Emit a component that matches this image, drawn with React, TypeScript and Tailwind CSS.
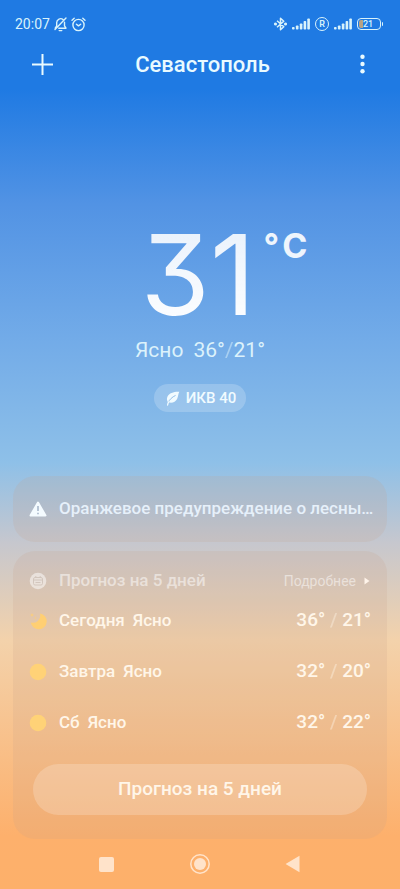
import type { ReactNode } from "react";

const forecast = [
  { day: "Сегодня", text: "Ясно", high: "36°", low: "21°", night: true },
  { day: "Завтра", text: "Ясно", high: "32°", low: "20°", night: false },
  { day: "Сб", text: "Ясно", high: "32°", low: "22°", night: false },
];

const SignalIcon = () => (
  <svg width="18" height="12" viewBox="0 0 18 12" fill="currentColor" aria-hidden="true">
    <rect x="0" y="9" width="2.6" height="2.6" rx="0.8" />
    <rect x="3.9" y="7.4" width="2.6" height="4.2" rx="0.8" />
    <rect x="7.8" y="5.4" width="2.6" height="6.2" rx="0.8" />
    <rect x="11.6" y="3" width="2.6" height="8.6" rx="0.8" />
    <rect x="15.3" y="0.4" width="2.6" height="11.2" rx="0.8" />
  </svg>
);

const StatusBar = () => (
  <div className="flex h-12 items-center justify-between pl-[15px] pr-[17px] text-[#d9f3fb]">
    <div className="flex items-center gap-1">
      <span className="text-sm">20:07</span>
      <svg width="13" height="15" viewBox="0 0 13 15" fill="none" stroke="currentColor" strokeWidth="1.4" strokeLinecap="round" strokeLinejoin="round" aria-hidden="true">
        <path d="M9.2 2.7A3.9 3.9 0 0 0 2.7 5.6v3.2L1.2 11.2h1M10.5 5.2v3.6l1.5 2.4H4.8M5.2 13.6h2.6M12 1 1 12.6" />
      </svg>
      <svg width="15" height="15" viewBox="0 0 15 15" fill="none" stroke="currentColor" strokeWidth="1.4" strokeLinecap="round" strokeLinejoin="round" aria-hidden="true">
        <circle cx="7.5" cy="8" r="5.6" />
        <path d="M1 3.2 3.2 1.2M14 3.2 11.8 1.2M5.4 7.2l2.1 1.7 2.2-1.7" />
      </svg>
    </div>
    <div className="flex items-center gap-[5px]">
      <svg width="13" height="14" viewBox="0 0 13 14" fill="none" stroke="currentColor" strokeWidth="1.5" strokeLinejoin="round" aria-hidden="true">
        <path d="M3 3.8 9.8 9.8 6.5 12.8V1.2l3.3 3L3 10.2" />
        <circle cx="1.5" cy="7" r="0.8" fill="currentColor" />
        <circle cx="11.5" cy="7" r="0.8" fill="currentColor" />
      </svg>
      <SignalIcon />
      <span className="flex size-[14px] items-center justify-center rounded-full border border-current text-[9px] font-semibold leading-none">
        R
      </span>
      <SignalIcon />
      <span className="flex items-center gap-px">
        <span className="flex h-3 w-6 items-center rounded-[4px] border border-current p-px">
          <span className="h-2 w-1 rounded-l-[2px] bg-[#b7a184]" />
          <span className="text-[9px] font-medium leading-none">21</span>
        </span>
        <span className="h-1 w-px rounded-r bg-current" />
      </span>
    </div>
  </div>
);

const TopBar = () => (
  <header className="flex h-8 items-center justify-between pl-8 pr-7 text-[#e9faff]">
    <button aria-label="Добавить город">
      <svg width="21" height="21" viewBox="0 0 21 21" stroke="currentColor" strokeWidth="2" aria-hidden="true">
        <path d="M10.5 0v21M0 10.5h21" />
      </svg>
    </button>
    <h1 className="text-[22px] font-medium">Севастополь</h1>
    <button aria-label="Меню" className="flex w-5 justify-center">
      <svg width="5" height="20" viewBox="0 0 5 20" fill="currentColor" aria-hidden="true">
        <circle cx="2.5" cy="2.8" r="2.2" />
        <circle cx="2.5" cy="10" r="2.2" />
        <circle cx="2.5" cy="17.2" r="2.2" />
      </svg>
    </button>
  </header>
);

const Current = () => (
  <section className="flex flex-col items-center pt-[138px]">
    <div className="relative pr-1 text-white/90">
      <span className="bg-linear-to-b from-white/85 to-white bg-clip-text font-[Inter] text-[112px] leading-[112px] text-transparent [font-feature-settings:'cv09']">
        31
      </span>
      <span className="absolute left-full top-2 flex gap-[3px] pl-1 pt-1 font-[Inter] text-[34px] font-bold leading-8">
        <span>°</span>
        <span>C</span>
      </span>
    </div>
    <p className="mt-1 flex gap-[10px] text-[21px] leading-8 text-[#dcf2fb]">
      <span>Ясно</span>
      <span>
        36°<span className="opacity-50">/</span>21°
      </span>
    </p>
    <a href="#air" className="mt-[18px] flex h-7 items-center gap-[6px] rounded-full bg-white/20 pl-3 pr-[10px] text-[15px] font-medium text-[#f1fbff]">
      <svg width="14" height="15" viewBox="0 0 14 15" fill="none" strokeLinecap="round" aria-hidden="true">
        <path d="M13.3.7C8.5.4 3.200 1.600 1.400 5.800c-.9 2.200-.4 4.100.6 5.400 3.800 1.200 7.400.2 9.100-3.200C12.200 5.700 12.100 3 13.300.7Z" fill="currentColor" />
        <path d="M9.200 4.600C6.200 6 3.600 8.400 2 11.600" stroke="#93bfea" strokeWidth="1" />
        <path d="M2.600 10.800C2.200 11.800 1.800 12.900 1.600 14" stroke="currentColor" strokeWidth="1.300" />
      </svg>
      ИКВ 40
    </a>
  </section>
);

const Card = ({ children, className }: { children: ReactNode; className: string }) => (
  <section className={`rounded-[22px] bg-[#c9a08c]/18 ${className}`}>{children}</section>
);

const DayIcon = ({ night }: { night: boolean }) => (
  <svg width="18" height="18" viewBox="0 0 18 18" aria-hidden="true">
    {night ? (
      <>
        <path d="M11 1.400A8 8 0 1 1 1.800 10.500 7.400 7.400 0 0 0 11 1.400Z" fill="#ffcf73" />
        <path d="m3 1 .5 1.500L5 3l-1.500.5L3 5l-.5-1.500L1 3l1.500-.5ZM6.500 4.800l.3.900.9.300-.9.300-.3.900-.3-.9-.9-.3.900-.3Z" fill="#ffcf73" />
      </>
    ) : (
      <circle cx="9" cy="9" r="8.3" fill="#ffd277" />
    )}
  </svg>
);

const NavBar = () => (
  <nav className="flex h-[50px] items-center justify-center gap-[74px] pr-1 text-[#ffe3ca]">
    <button aria-label="Недавние" className="flex w-5 justify-center">
      <span className="size-[15px] rounded-[2px] bg-current" />
    </button>
    <button aria-label="Домой">
      <svg width="20" height="20" viewBox="0 0 20 20" aria-hidden="true">
        <circle cx="10" cy="10" r="9.2" fill="none" stroke="currentColor" strokeWidth="1.5" />
        <circle cx="10" cy="10" r="6" fill="currentColor" />
      </svg>
    </button>
    <button aria-label="Назад" className="flex w-4 justify-center">
      <svg width="15" height="18" viewBox="0 0 15 18" aria-hidden="true">
        <path d="M14.5.8v16.4L.6 9Z" fill="currentColor" />
      </svg>
    </button>
  </nav>
);

const App = () => {
  return (
    <div className="flex min-h-screen flex-col bg-[linear-gradient(to_bottom,#1f7ae3_0%,#1f7ae3_10%,#5293e4_23%,#72abe8_38%,#8ec0e8_52%,#c6c7ce_61%,#f3d2ab_72%,#fdb06c_94%,#fdb06a_100%)] font-[Roboto,sans-serif]">
      <StatusBar />
      <TopBar />
      <main className="flex flex-1 flex-col">
        <Current />
        <div className="mt-auto flex flex-col gap-[9px] px-[13px] pt-8">
          <Card className="flex h-[66px] items-center gap-3 pl-4 pr-2 text-[#e6f0fa]">
            <svg className="shrink-0" width="18" height="16" viewBox="0 0 18 16" aria-hidden="true">
              <path d="M9 1.5 16.5 14.5h-15Z" fill="#f4fbff" stroke="#f4fbff" strokeWidth="2" strokeLinejoin="round" />
              <path d="M9 5v5M9 11.8v1.5" stroke="#a3b4c8" strokeWidth="1.5" />
            </svg>
            <p className="truncate text-[17px] font-medium">Оранжевое предупреждение о лесны…</p>
          </Card>
          <Card className="px-4 pb-6 pt-3">
            <div className="flex h-9 items-center gap-3 text-white/50">
              <svg width="18" height="18" viewBox="0 0 18 18" aria-hidden="true">
                <circle cx="9" cy="9" r="8.3" fill="currentColor" />
                <g fill="none" stroke="#c9bbb1" strokeWidth="1" opacity="0.7">
                  <rect x="4.5" y="5.5" width="9" height="7.5" rx="1.5" />
                  <path d="M4.5 8h9M6.8 4v2M11.2 4v2M6.5 10.5h5" />
                </g>
              </svg>
              <h2 className="flex-1 text-[17px] font-medium">Прогноз на 5 дней</h2>
              <a href="#details" className="flex items-center gap-2 pr-px text-sm">
                Подробнее
                <svg width="6" height="8" viewBox="0 0 6 8" aria-hidden="true">
                  <path d="M.5.5 5.5 4 .5 7.5Z" fill="#fff4ea" />
                </svg>
              </a>
            </div>
            <ul className="-mt-1">
              {forecast.map((item) => (
                <li key={item.day} className="flex h-[51px] items-center gap-3 text-[#fff6e9]">
                  <DayIcon night={item.night} />
                  <span className="flex flex-1 gap-2 text-[17px] font-medium">
                    <span>{item.day}</span>
                    <span>{item.text}</span>
                  </span>
                  <span className="text-[19px] font-medium">
                    {item.high} <span className="opacity-40">/</span> {item.low}
                  </span>
                </li>
              ))}
            </ul>
            <div className="px-1 pt-4">
              <button className="h-[51px] w-full rounded-full bg-white/20 text-[19px] font-medium text-[#fff6e9]">
                Прогноз на 5 дней
              </button>
            </div>
          </Card>
        </div>
      </main>
      <NavBar />
    </div>
  );
};

export default App;
